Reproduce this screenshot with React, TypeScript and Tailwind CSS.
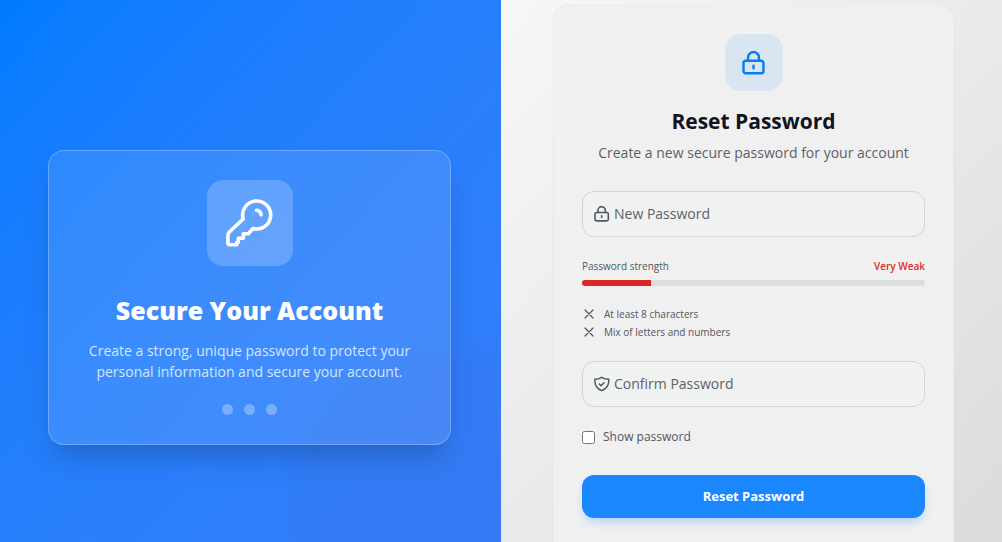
import { useState } from 'react';

interface IconProps {
  className?: string;
}

function KeyIcon({ className }: IconProps) {
  return (
    <svg className={className} viewBox="0 0 48 48" fill="none" stroke="currentColor" strokeWidth="3.6" strokeLinecap="round" strokeLinejoin="round" aria-hidden="true">
      <path d="M31 2a14 14 0 1 1-4 27.500l-4.700 5.300h-5v4.400h-5v4h-1.500v2.600H3.900a2 2 0 0 1-2-2v-7c0-1.600.6-3 1.700-4.100L17.200 20A14 14 0 0 1 31 2Z" />
      <path d="M30.500 11.200c2.400.2 4.300 2 4.600 4.500" />
    </svg>
  );
}

function LockIcon({ className }: IconProps) {
  return (
    <svg className={className} viewBox="0 0 24 24" fill="none" stroke="currentColor" strokeWidth="2.4" strokeLinecap="round" strokeLinejoin="round" aria-hidden="true">
      <rect x="1.500" y="9.800" width="20" height="12.500" rx="2.500" />
      <path d="M6 9.800V6.500a5.500 5.500 0 0 1 11 0v3.300M11.500 14.800v2.500" />
    </svg>
  );
}

function ShieldIcon({ className }: IconProps) {
  return (
    <svg className={className} viewBox="0 0 24 24" fill="none" stroke="currentColor" strokeWidth="2.2" strokeLinecap="round" strokeLinejoin="round" aria-hidden="true">
      <path d="M11.500 2C14.300 4 17.500 5 22.200 5c.4 8-2.700 14-10.700 17C3.500 19 .9 13 1.300 5c4.200 0 7.400-1 10.200-3Z" />
      <path d="m8 12 2.500 2.500L15 10" />
    </svg>
  );
}

function CrossIcon({ className }: IconProps) {
  return (
    <svg className={className} viewBox="0 0 14 14" fill="none" stroke="currentColor" strokeWidth="1.2" strokeLinecap="round" aria-hidden="true">
      <path d="m3 3 8 8M11 3l-8 8" />
    </svg>
  );
}

interface PasswordFieldProps {
  id: string;
  label: string;
  visible: boolean;
  icon: React.ReactNode;
}

function PasswordField({ id, label, visible, icon }: PasswordFieldProps) {
  return (
    <div className="flex h-[46px] items-center gap-1 rounded-xl border border-[#d3d4d6] bg-[#f0f1f1] px-[11px] text-[#50565e]">
      {icon}
      <input
        id={id}
        type={visible ? 'text' : 'password'}
        placeholder={label}
        aria-label={label}
        className="h-full min-w-0 flex-1 bg-transparent pb-0.5 text-[14px] leading-6 outline-none placeholder:text-[#5c6168]"
      />
    </div>
  );
}

const requirements = ['At least 8 characters', 'Mix of letters and numbers'];

export default function App() {
  const [visible, setVisible] = useState(false);

  return (
    <div className="grid h-screen grid-cols-2 overflow-hidden font-['Open_Sans','Noto_Sans',sans-serif]">
      {/* Brand panel */}
      <section className="relative flex items-center overflow-hidden bg-gradient-to-br from-[#007bff] via-[#277ffc] to-[#367df8] pt-[53px] pr-[50px] pl-12">
        <div className="absolute -right-28 -bottom-32 size-80 rounded-full bg-[#3574e8]/25 blur-sm" />

        <div className="relative flex w-full flex-col items-center rounded-2xl border border-white/25 bg-white/10 px-7 pt-[29px] pb-[29px] text-center shadow-[0_18px_28px_-8px_rgba(20,50,100,0.35)]">
          <div className="mb-[26px] flex size-[86px] items-center justify-center rounded-2xl bg-white/20 text-white">
            <KeyIcon className="size-12" />
          </div>
          <h2 className="mb-3 text-[25px] leading-9 font-extrabold text-white">Secure Your Account</h2>
          <p className="mb-[22px] max-w-[330px] text-[14px] leading-[21px] text-[#d3e6ff]">
            Create a strong, unique password to protect your personal information and secure your account.
          </p>
          <div className="flex gap-[11px]">
            <span className="size-[11px] rounded-full bg-white/30" />
            <span className="size-[11px] rounded-full bg-white/30" />
            <span className="size-[11px] rounded-full bg-white/30" />
          </div>
        </div>
      </section>

      {/* Form panel */}
      <main className="overflow-hidden bg-gradient-to-br from-[#f7f7f7] via-[#e9eaeb] to-[#dadbdd] pt-1 pr-12 pl-[52px]">
        <div className="mx-auto h-[600px] max-w-[403px] rounded-2xl border border-[#ebecec] bg-[#f0f0f0] px-7 pt-[29px] shadow-xs">
          <div className="flex flex-col items-center text-center">
            <div className="mb-3 flex h-[57px] w-[58px] items-center justify-center rounded-2xl bg-[#d9e5f1] text-[#087cf8]">
              <LockIcon className="size-6" />
            </div>
            <h1 className="mb-1 text-[21px] leading-9 font-bold text-[#11141f]">Reset Password</h1>
            <p className="text-[14px] leading-5 text-[#5c6168]">Create a new secure password for your account</p>
          </div>

          <form className="mt-7" onSubmit={(e) => e.preventDefault()}>
            <PasswordField id="new-password" label="New Password" visible={visible} icon={<LockIcon className="size-4 shrink-0" />} />

            <div className="mt-5 flex justify-between text-[10px] leading-[18px] text-[#50565e]">
              <span>Password strength</span>
              <span className="font-semibold text-[#dc2b2b]">Very Weak</span>
            </div>
            <div className="mt-[5px] h-1.5 overflow-hidden rounded-full bg-[#dcdddd]">
              <div className="h-full w-1/5 bg-[#dc2626]" />
            </div>

            <ul className="mt-[19px] text-[10px] leading-[18px] text-[#50565e]">
              {requirements.map((item) => (
                <li key={item} className="flex items-center gap-2">
                  <CrossIcon className="size-3.5" />
                  {item}
                </li>
              ))}
            </ul>

            <div className="mt-5">
              <PasswordField id="confirm-password" label="Confirm Password" visible={visible} icon={<ShieldIcon className="size-4 shrink-0" />} />
            </div>

            <label className="mt-5 flex items-center gap-2 text-[12px] leading-5 text-[#50565e]">
              <input type="checkbox" className="size-[13px]" checked={visible} onChange={(e) => setVisible(e.target.checked)} />
              Show password
            </label>

            <button type="submit" className="mt-7 h-[43px] w-full rounded-xl bg-[#1a87ff] text-[13px] font-bold text-white shadow-[0_6px_10px_-2px_rgba(0,123,255,0.25)]">
              Reset Password
            </button>
          </form>
        </div>
      </main>
    </div>
  );
}
